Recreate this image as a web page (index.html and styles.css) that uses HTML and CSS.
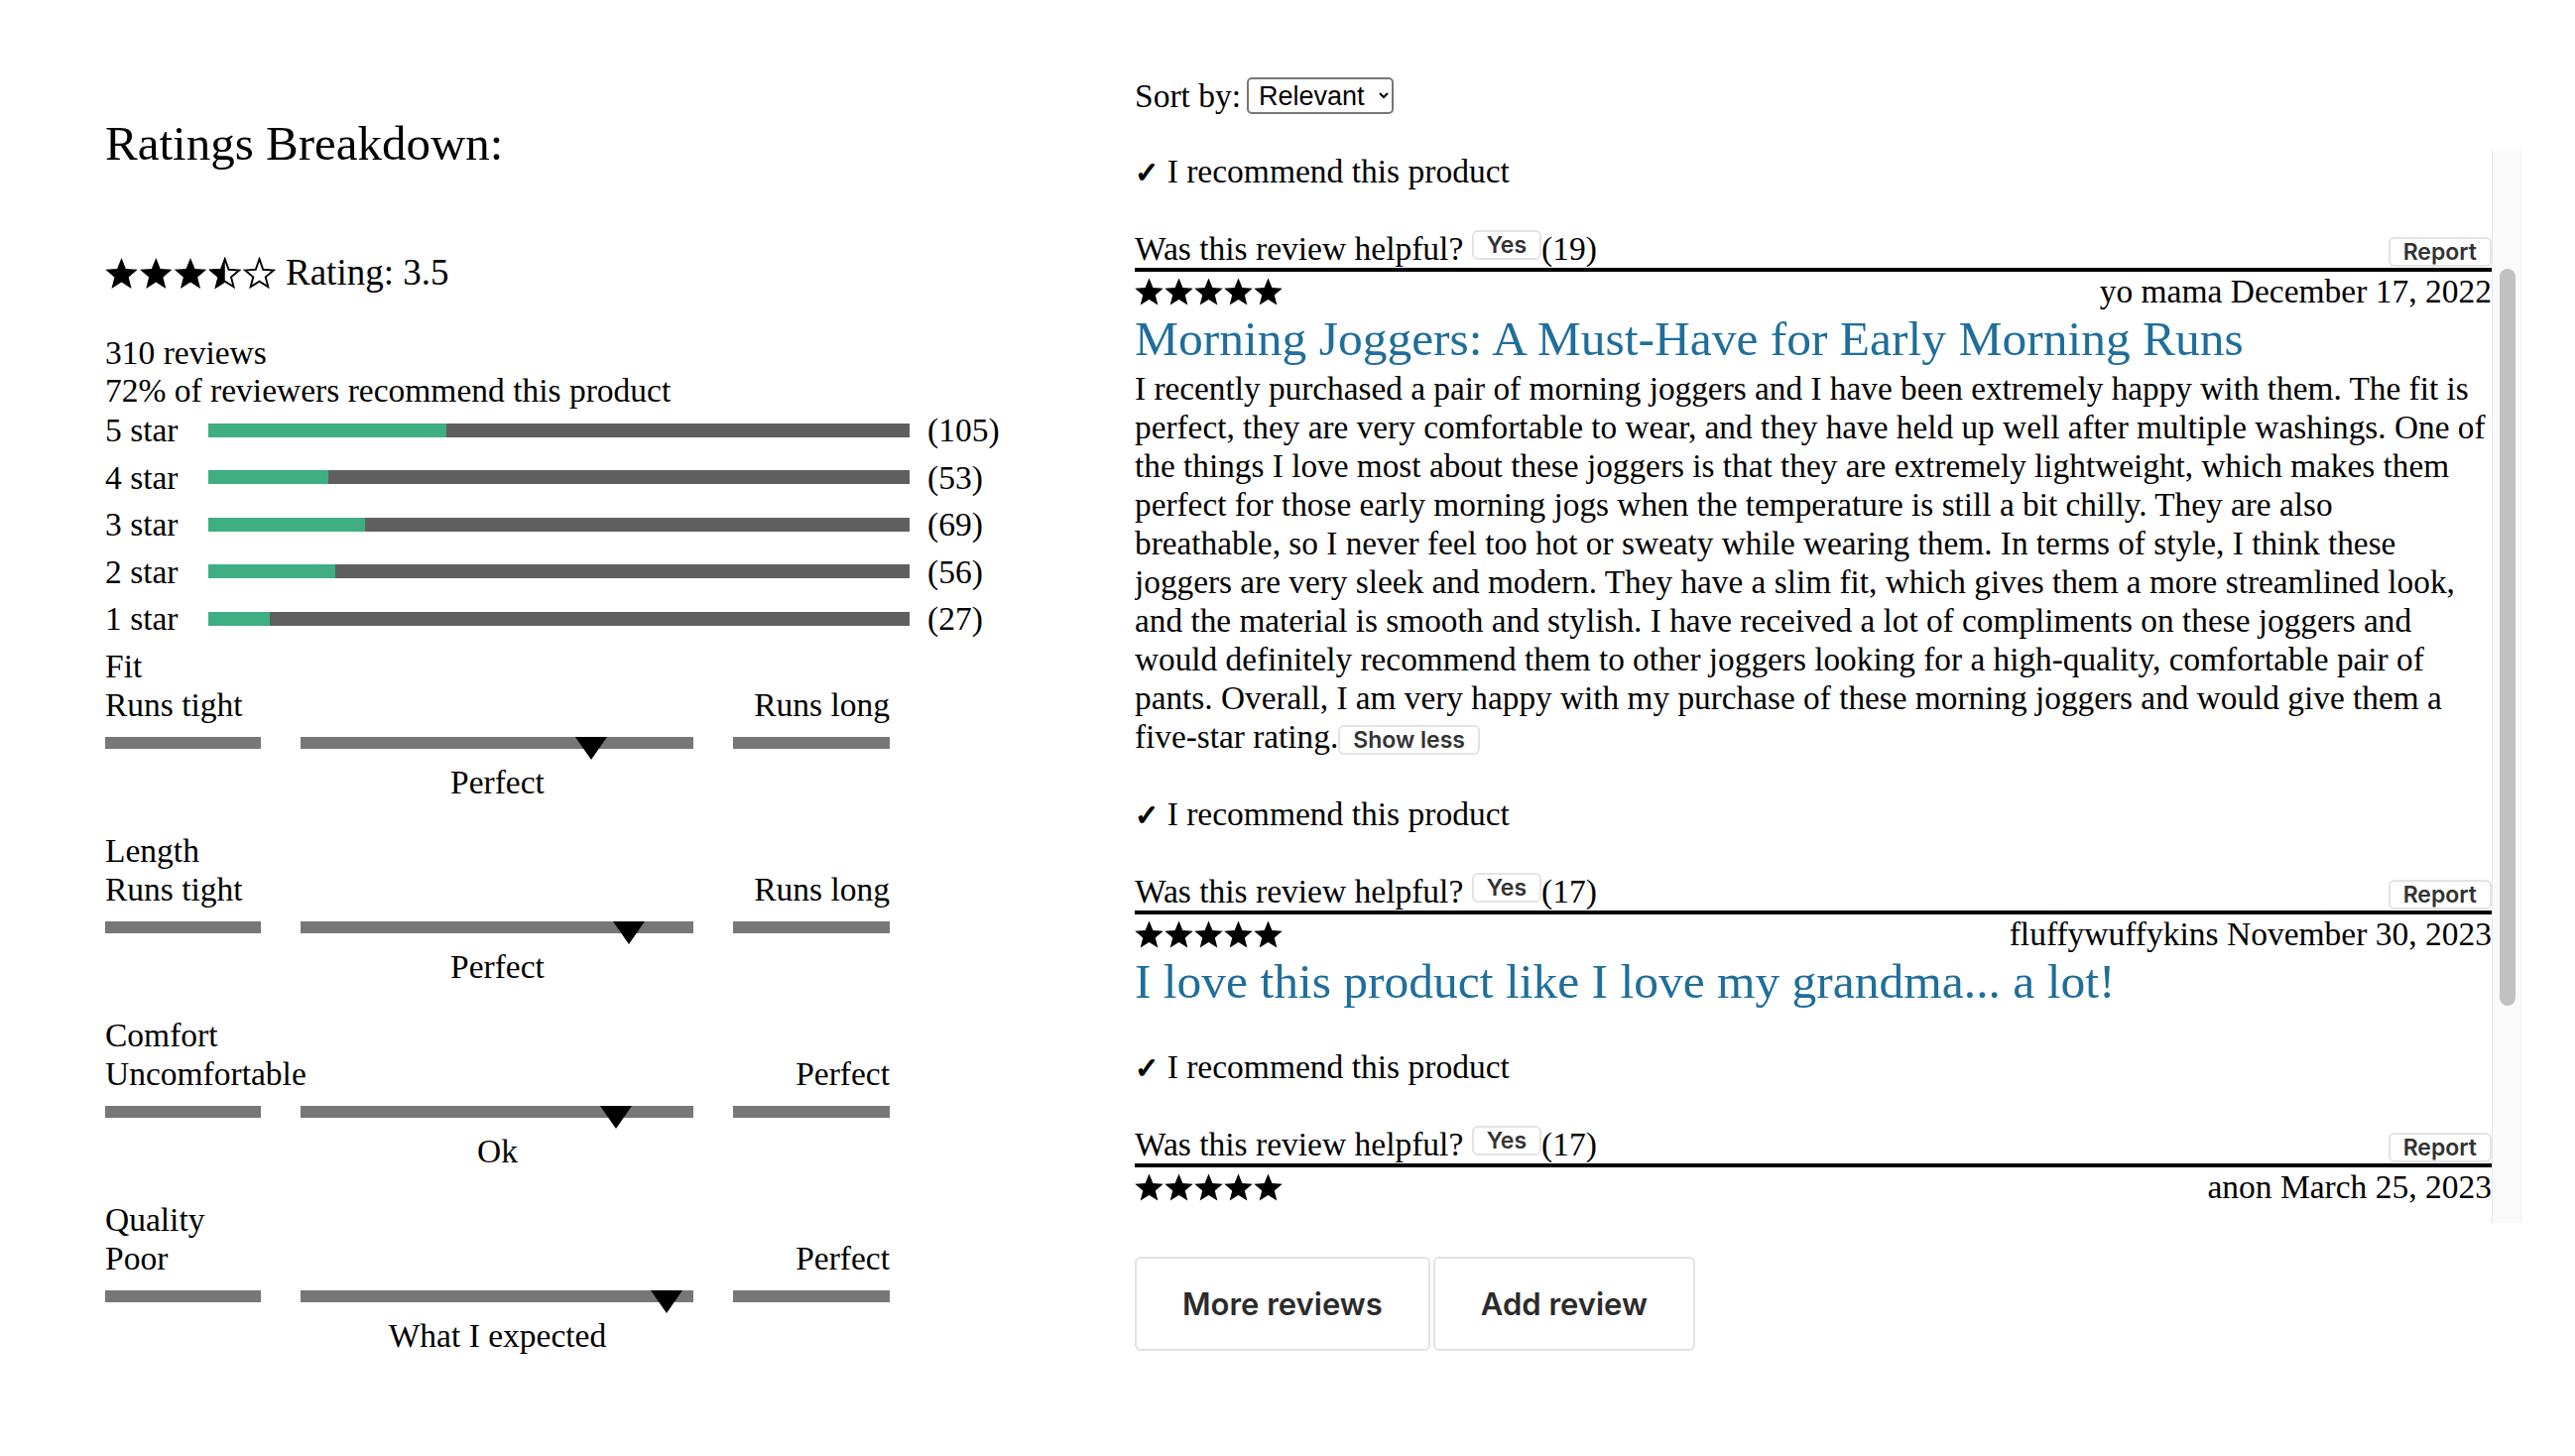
FILE: index.html
```html
<!DOCTYPE html>
<html lang="en">
<head>
<meta charset="utf-8">
<title>Ratings &amp; Reviews</title>
<link rel="stylesheet" href="styles.css">
</head>
<body>
<svg class="svg-defs" aria-hidden="true">
  <defs>
    <clipPath id="half-clip" clipPathUnits="userSpaceOnUse"><rect x="0" y="0" width="12" height="24"/></clipPath>
    <symbol id="star-solid" viewBox="0.6 0.9 22.8 21.8"><path d="M12 1.1L15.06 8.69L23.22 9.25L16.95 14.51L18.94 22.45L12 18.1L5.06 22.45L7.05 14.51L0.78 9.25L8.94 8.69Z" fill="#000"/></symbol>
    <symbol id="star-outline" viewBox="0.6 0.9 22.8 21.8"><path d="M12 1.9L14.6 9.2L22 9.7L16.3 14.4L18.1 21.3L12 17.4L5.9 21.3L7.7 14.4L2 9.7L9.4 9.2Z" fill="none" stroke="#000" stroke-width="1.3" stroke-linejoin="miter"/></symbol>
    <symbol id="star-half" viewBox="0.6 0.9 22.8 21.8"><path d="M12 1.9L14.6 9.2L22 9.7L16.3 14.4L18.1 21.3L12 17.4L5.9 21.3L7.7 14.4L2 9.7L9.4 9.2Z" fill="none" stroke="#000" stroke-width="1.3"/><path clip-path="url(#half-clip)" d="M12 1.1L15.06 8.69L23.22 9.25L16.95 14.51L18.94 22.45L12 18.1L5.06 22.45L7.05 14.51L0.78 9.25L8.94 8.69Z" fill="#000"/></symbol>
    <symbol id="five-stars" viewBox="0 0 149 28"><use href="#star-solid" x="0" y="0" width="29" height="28"/><use href="#star-solid" x="30" y="0" width="29" height="28"/><use href="#star-solid" x="60" y="0" width="29" height="28"/><use href="#star-solid" x="90" y="0" width="29" height="28"/><use href="#star-solid" x="120" y="0" width="29" height="28"/></symbol>
  </defs>
</svg>

<main class="page">
  <section class="breakdown">
    <h2 class="breakdown-title">Ratings Breakdown:</h2>
    <div class="summary-rating">
      <svg class="stars-lg" viewBox="0 0 172 33" aria-label="3.5 stars">
        <use href="#star-solid" x="0" y="0" width="33" height="33"/>
        <use href="#star-solid" x="34.75" y="0" width="33" height="33"/>
        <use href="#star-solid" x="69.5" y="0" width="33" height="33"/>
        <use href="#star-half" x="104.25" y="0" width="33" height="33"/>
        <use href="#star-outline" x="139" y="0" width="33" height="33"/>
      </svg>
      <span class="rating-text">Rating: 3.5</span>
    </div>
    <div class="review-count">
      <div>310 reviews</div>
      <div>72% of reviewers recommend this product</div>
    </div>
    <div class="bar-list">
      <div class="bar-row"><span class="bar-label">5 star</span><span class="bar-track"><span class="bar-fill" style="width:33.9%"></span></span><span class="bar-count">(105)</span></div>
      <div class="bar-row"><span class="bar-label">4 star</span><span class="bar-track"><span class="bar-fill" style="width:17.1%"></span></span><span class="bar-count">(53)</span></div>
      <div class="bar-row"><span class="bar-label">3 star</span><span class="bar-track"><span class="bar-fill" style="width:22.3%"></span></span><span class="bar-count">(69)</span></div>
      <div class="bar-row"><span class="bar-label">2 star</span><span class="bar-track"><span class="bar-fill" style="width:18.1%"></span></span><span class="bar-count">(56)</span></div>
      <div class="bar-row"><span class="bar-label">1 star</span><span class="bar-track"><span class="bar-fill" style="width:8.7%"></span></span><span class="bar-count">(27)</span></div>
    </div>
    <div class="char-list">
      <div class="char">
        <div class="char-name">Fit</div>
        <div class="char-ends"><span>Runs tight</span><span>Runs long</span></div>
        <div class="char-bars"><span class="seg"></span><span class="seg"><span class="marker" style="left:74%"></span></span><span class="seg"></span></div>
        <div class="char-mid">Perfect</div>
      </div>
      <div class="char">
        <div class="char-name">Length</div>
        <div class="char-ends"><span>Runs tight</span><span>Runs long</span></div>
        <div class="char-bars"><span class="seg"></span><span class="seg"><span class="marker" style="left:83.6%"></span></span><span class="seg"></span></div>
        <div class="char-mid">Perfect</div>
      </div>
      <div class="char">
        <div class="char-name">Comfort</div>
        <div class="char-ends"><span>Uncomfortable</span><span>Perfect</span></div>
        <div class="char-bars"><span class="seg"></span><span class="seg"><span class="marker" style="left:80.3%"></span></span><span class="seg"></span></div>
        <div class="char-mid">Ok</div>
      </div>
      <div class="char">
        <div class="char-name">Quality</div>
        <div class="char-ends"><span>Poor</span><span>Perfect</span></div>
        <div class="char-bars"><span class="seg"></span><span class="seg"><span class="marker" style="left:93.2%"></span></span><span class="seg"></span></div>
        <div class="char-mid">What I expected</div>
      </div>
    </div>
  </section>

  <section class="reviews">
    <div class="sort-row">
      <label for="sort">Sort by:</label>
      <select id="sort" class="sort-select">
        <option>Relevant</option>
        <option>Helpful</option>
        <option>Newest</option>
      </select>
    </div>

    <div class="review-pane">
      <div class="review-list">
        <article class="review-tile">
          <div class="tile-head"><svg class="stars-sm" viewBox="0 0 149 28"><use href="#five-stars"/></svg><span class="tile-meta">runner22 January 4, 2023</span></div>
          <h3 class="tile-title">Great everyday joggers</h3>
          <p class="tile-body">Soft fabric, a relaxed fit and deep pockets. I wear them all the time.</p>
          <div class="recommend scroll-anchor"><span class="check">✓</span> I recommend this product</div>
          <div class="helpful"><span>Was this review helpful? <button class="pill pill-yes">Yes</button>(19)</span><button class="pill">Report</button></div>
        </article>

        <article class="review-tile">
          <div class="tile-head"><svg class="stars-sm" viewBox="0 0 149 28"><use href="#five-stars"/></svg><span class="tile-meta">yo mama December 17, 2022</span></div>
          <h3 class="tile-title">Morning Joggers: A Must-Have for Early Morning Runs</h3>
          <p class="tile-body">I recently purchased a pair of morning joggers and I have been extremely happy with them. The fit is perfect, they are very comfortable to wear, and they have held up well after multiple washings. One of the things I love most about these joggers is that they are extremely lightweight, which makes them perfect for those early morning jogs when the temperature is still a bit chilly. They are also<br>breathable, so I never feel too hot or sweaty while wearing them. In terms of style, I think these joggers are very sleek and modern. They have a slim fit, which gives them a more streamlined look, and the material is smooth and stylish. I have received a lot of compliments on these joggers and would definitely recommend them to other joggers looking for a high-quality, comfortable pair of pants. Overall, I am very happy with my purchase of these morning joggers and would give them a five-star rating.<button class="pill">Show less</button></p>
          <div class="recommend"><span class="check">✓</span> I recommend this product</div>
          <div class="helpful"><span>Was this review helpful? <button class="pill pill-yes">Yes</button>(17)</span><button class="pill">Report</button></div>
        </article>

        <article class="review-tile">
          <div class="tile-head"><svg class="stars-sm" viewBox="0 0 149 28"><use href="#five-stars"/></svg><span class="tile-meta">fluffywuffykins November 30, 2023</span></div>
          <h3 class="tile-title">I love this product like I love my grandma... a lot!</h3>
          <p class="tile-body"></p>
          <div class="recommend"><span class="check">✓</span> I recommend this product</div>
          <div class="helpful"><span>Was this review helpful? <button class="pill pill-yes">Yes</button>(17)</span><button class="pill">Report</button></div>
        </article>

        <article class="review-tile">
          <div class="tile-head"><svg class="stars-sm" viewBox="0 0 149 28"><use href="#five-stars"/></svg><span class="tile-meta">anon March 25, 2023</span></div>
          <h3 class="tile-title">wow, so warm</h3>
          <p class="tile-body">These are the comfiest joggers I own. The waistband stays put, the cuffs are not too tight, and the color has not faded at all after a few months of regular wear and washing. I bought a second pair in another color right away and I would buy them again for my whole family.</p>
          <div class="recommend"><span class="check">✓</span> I recommend this product</div>
          <div class="helpful"><span>Was this review helpful? <button class="pill pill-yes">Yes</button>(12)</span><button class="pill">Report</button></div>
        </article>
      </div>
      <div class="scroll-track"><div class="scroll-thumb"></div></div>
    </div>

    <div class="list-actions">
      <button class="action-btn">More reviews</button>
      <button class="action-btn">Add review</button>
    </div>
  </section>
</main>
<script src="script.js"></script>
</body>
</html>
```

FILE: styles.css
```css
* { box-sizing: border-box; }

html, body { background: #fff; }

body {
  margin: 0;
  font-family: "Liberation Serif", "Times New Roman", "DejaVu Serif", serif;
  font-size: 33.5px;
  line-height: 39px;
  color: #000;
}

.svg-defs {
  position: absolute;
  width: 0;
  height: 0;
  overflow: hidden;
}

.page {
  display: flex;
  align-items: flex-start;
  padding-left: 106px;
}

/* ---------- left: ratings breakdown ---------- */
.breakdown {
  width: 1038px;
  flex: none;
  padding-top: 118px;
}

.breakdown-title {
  margin: 0;
  font-size: 49px;
  line-height: 54px;
  font-weight: normal;
}

.summary-rating {
  display: flex;
  align-items: center;
  gap: 10px;
  height: 44px;
  margin-top: 81px;
}

.stars-lg { display: block; width: 172px; height: 33px; }

.rating-text { font-size: 37px; line-height: 44px; }

.review-count { margin-top: 40px; line-height: 38px; }

.bar-list { margin-top: -3px; }

.bar-row {
  display: flex;
  align-items: center;
  height: 47.5px;
}

.bar-label { width: 104px; flex: none; }

.bar-track {
  display: block;
  width: 707px;
  height: 14px;
  flex: none;
  background: #5f5f5f;
}

.bar-fill { display: block; height: 100%; background: #3fae82; }

.bar-count { margin-left: 18px; }

.char-list { width: 791px; margin-top: 4px; }

.char { margin-bottom: 30px; }

.char-ends { display: flex; justify-content: space-between; }

.char-bars {
  display: grid;
  grid-template-columns: 157px 396px 158px;
  column-gap: 40px;
  height: 12px;
  margin-top: 13px;
}

.seg { position: relative; background: #777; }

.marker {
  position: absolute;
  top: 0;
  width: 0;
  height: 0;
  border-left: 16px solid transparent;
  border-right: 16px solid transparent;
  border-top: 23px solid #000;
  transform: translateX(-50%);
}

.char-mid { margin-top: 14px; text-align: center; }

/* ---------- right: reviews list ---------- */
.reviews {
  width: 1398px;
  flex: none;
  padding-top: 77px;
}

.sort-row {
  display: flex;
  align-items: center;
  gap: 6px;
  height: 39px;
}

.sort-select {
  width: 148px;
  height: 37px;
  padding: 0 2px 0 6px;
  font-family: "Liberation Sans", Arial, sans-serif;
  font-size: 27px;
  color: #000;
  background: #fff;
  border: 2px solid #767676;
  border-radius: 5px;
}

.review-pane {
  display: flex;
  height: 1082px;
  margin-top: 35px;
}

.review-list {
  flex: 1;
  min-width: 0;
  height: 100%;
  overflow-y: scroll;
  scrollbar-width: none;
}

.scroll-track {
  position: relative;
  width: 30px;
  flex: none;
  background: #fafafa;
  border-left: 1px solid #e6e6e6;
  border-right: 1px solid #efefef;
}

.scroll-thumb {
  position: absolute;
  left: 7px;
  top: 130px;
  width: 16px;
  height: 745px;
  border-radius: 8px;
  background: #c1c1c1;
}

.review-tile { border-bottom: 4px solid #000; }

.tile-head {
  display: flex;
  justify-content: space-between;
  align-items: center;
  height: 39px;
}

.stars-sm { display: block; width: 149px; height: 28px; }

.tile-title {
  margin: 2px 0 0;
  font-size: 49.5px;
  line-height: 54px;
  font-weight: normal;
  color: #1f6e9b;
}

.tile-body { margin: 3px 0 0; font-size: 33.3px; }

.recommend { margin-top: 39px; height: 39px; }

.check {
  font-family: "DejaVu Sans", sans-serif;
  font-size: 29px;
  line-height: 0;
  -webkit-text-stroke: 1.3px #000;
}

.helpful {
  display: flex;
  justify-content: space-between;
  align-items: baseline;
  height: 39px;
  margin-top: 39px;
}

.pill {
  height: 30px;
  padding: 0 13px;
  font-family: Inter, "Liberation Sans", sans-serif;
  font-size: 23px;
  font-weight: 600;
  line-height: 26px;
  color: #333;
  background: #fff;
  border: 2px solid #e3e3e3;
  border-radius: 6px;
}

.pill-yes { vertical-align: top; margin-top: 1px; }

.list-actions {
  display: flex;
  gap: 3px;
  margin-top: 34px;
}

.action-btn {
  height: 95px;
  padding: 0 46px;
  font-family: Inter, "Liberation Sans", sans-serif;
  font-size: 31px;
  font-weight: 600;
  color: #2b2b2b;
  background: #fff;
  border: 2px solid #e2e2e2;
  border-radius: 6px;
}
```

FILE: script.js
```js
(function () {
  var list = document.querySelector('.review-list');
  if (!list) return;
  var anchor = list.querySelector('.scroll-anchor');
  if (anchor) list.scrollTop = anchor.offsetTop - list.offsetTop - 2;

  var track = document.querySelector('.scroll-track');
  var thumb = document.querySelector('.scroll-thumb');
  if (track && thumb && list.scrollHeight > 0) {
    var trackH = track.clientHeight;
    var ratio = list.clientHeight / list.scrollHeight;
    thumb.style.height = Math.round(trackH * ratio) + 'px';
    thumb.style.top = Math.round(trackH * list.scrollTop / list.scrollHeight) + 'px';
  }
})();
```
